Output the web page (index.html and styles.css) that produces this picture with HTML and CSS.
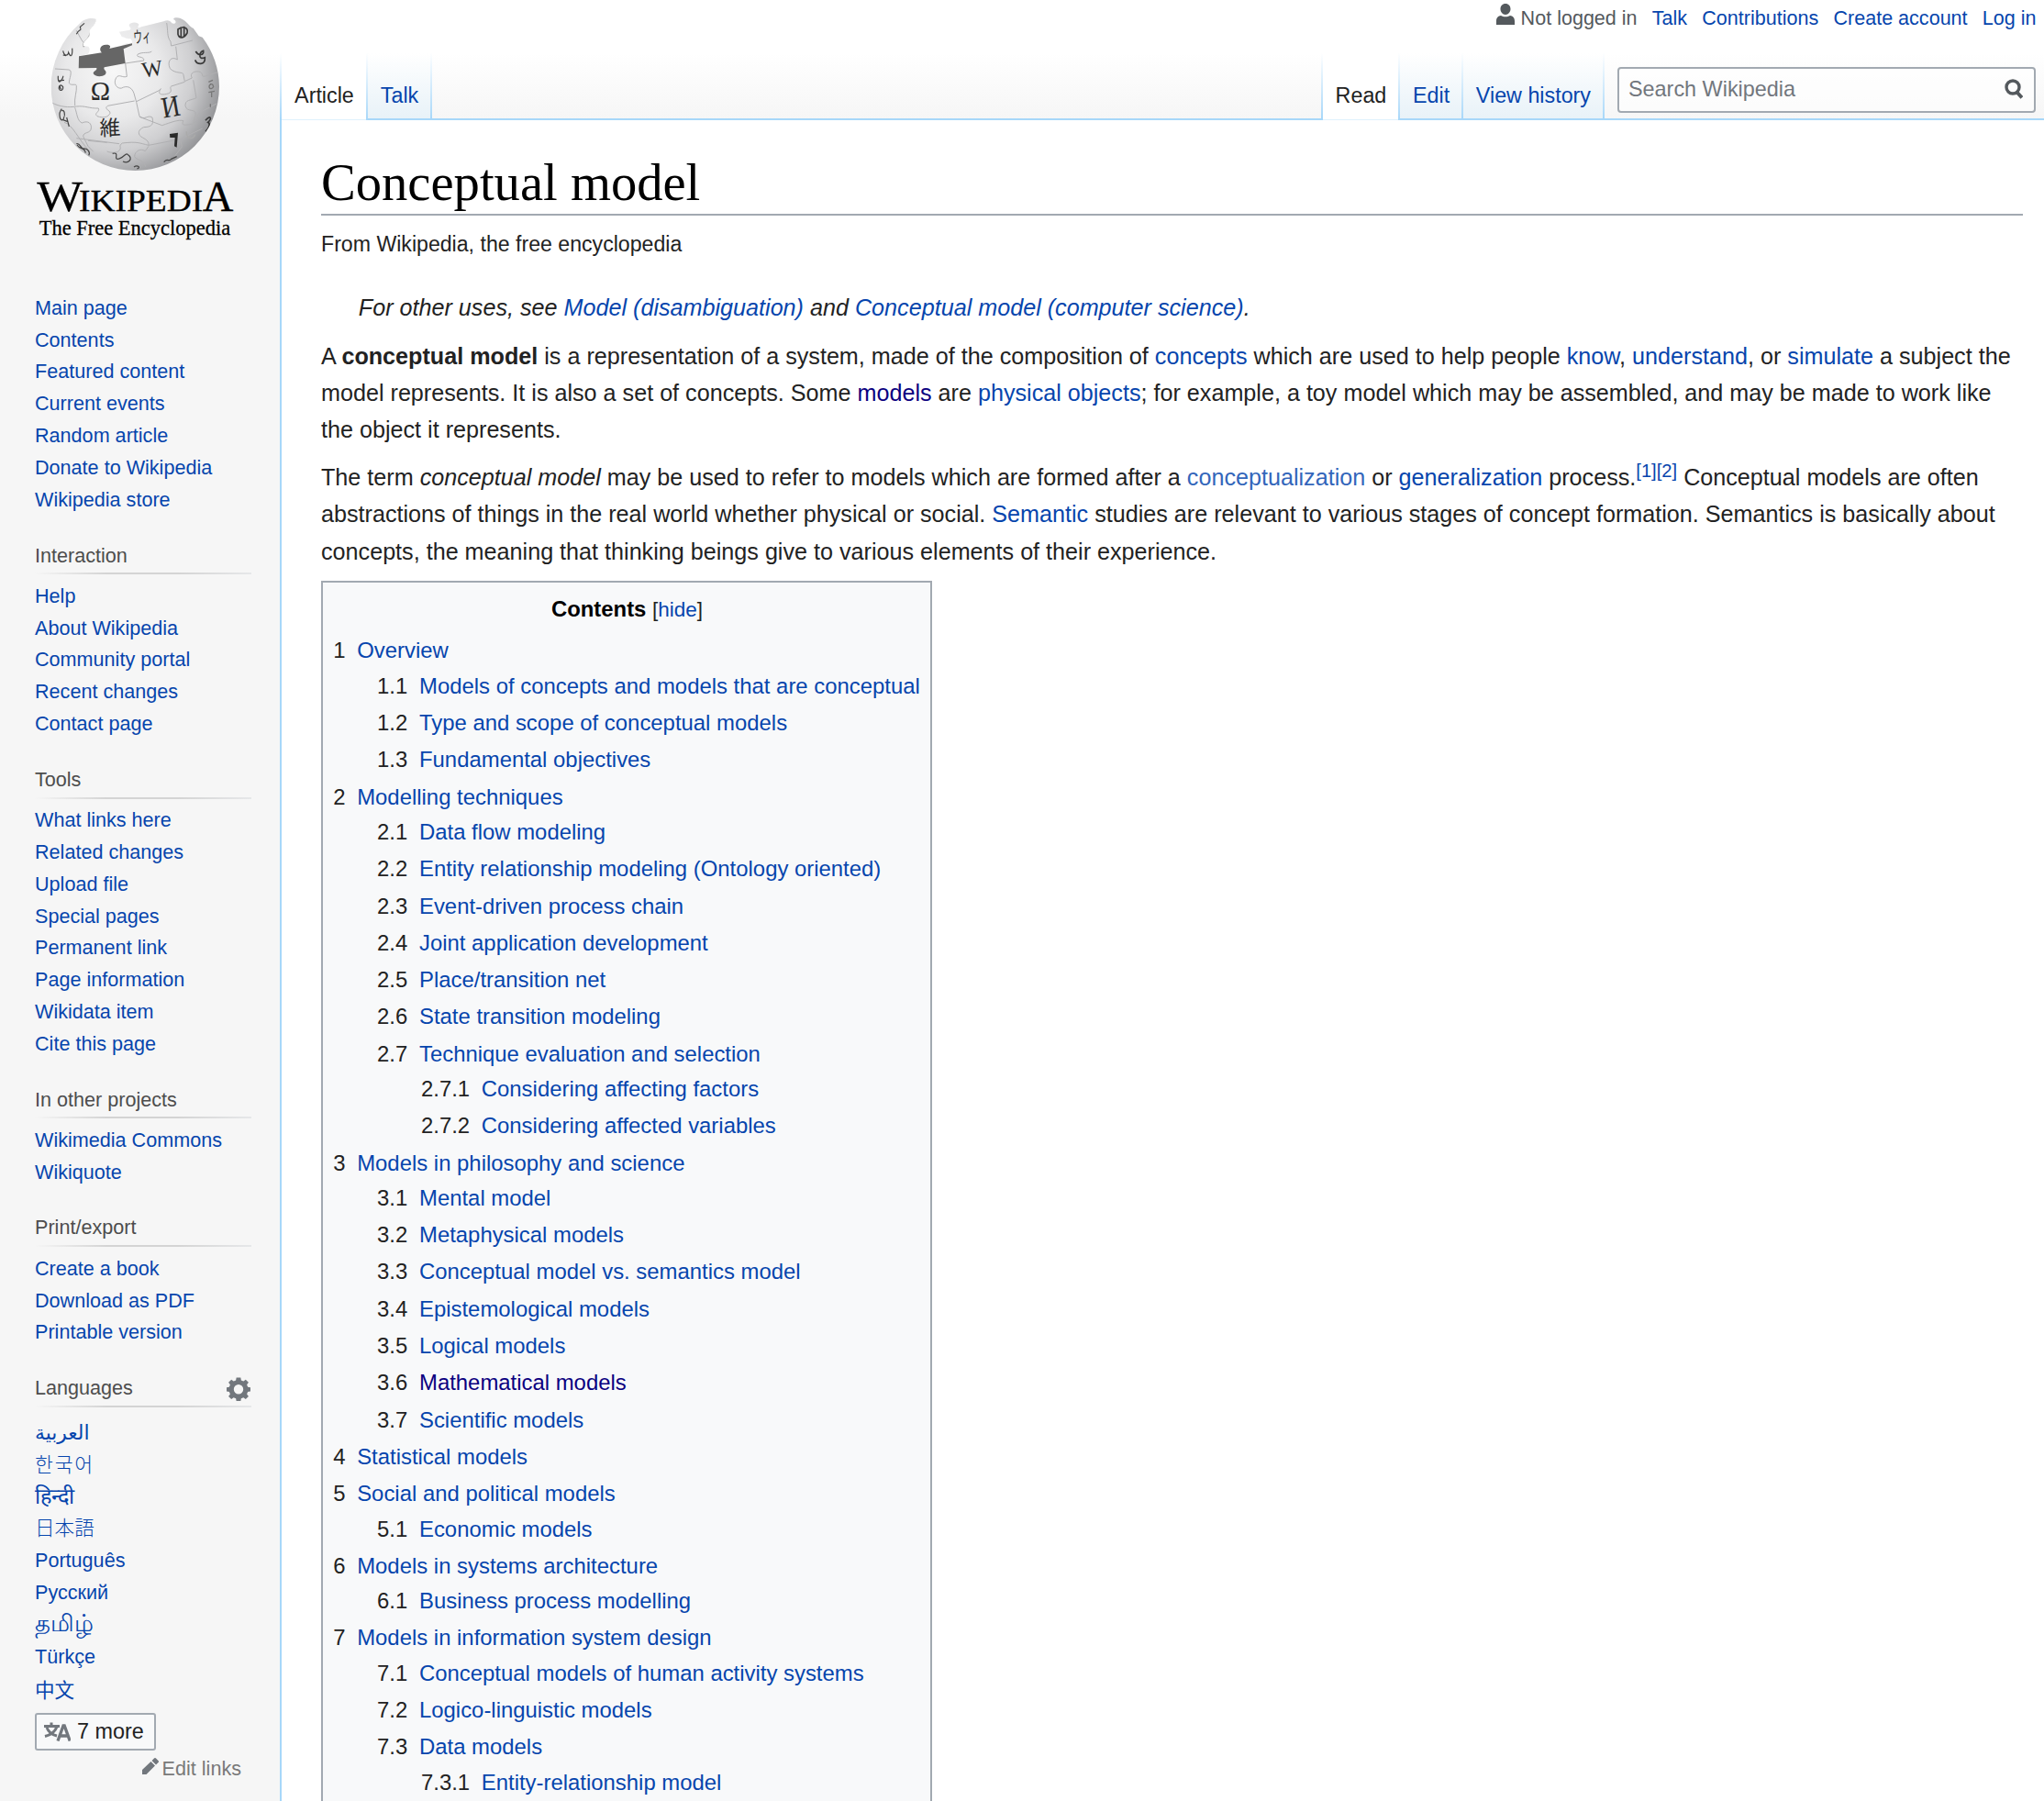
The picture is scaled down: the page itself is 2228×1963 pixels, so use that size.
FILE: index.html
```html
<!DOCTYPE html>
<html lang="en">
<head>
<meta charset="utf-8">
<title>Conceptual model - Wikipedia</title>
<link rel="stylesheet" href="styles.css">
</head>
<body>
<div class="page">
<aside class="sidebar">
  <svg class="logo" viewBox="0 0 920 870" role="img" aria-label="Wikipedia">
    <defs>
      <radialGradient id="ball" gradientUnits="userSpaceOnUse" cx="370" cy="235" r="370">
        <stop offset="0" stop-color="#f7f7f7"/><stop offset=".42" stop-color="#e9e9ea"/>
        <stop offset=".7" stop-color="#cfcfd1"/><stop offset="1" stop-color="#8f9093"/>
      </radialGradient>
      <clipPath id="globe"><path d="M314 62 C300 58 275 60 262 76 A275 275 0 0 0 167 283 A275 275 0 0 0 717 283 A275 275 0 0 0 662 122 L650 118 L632 92 C622 92 612 68 590 60 C580 56 564 58 568 64 C580 70 574 80 562 76 C554 64 545 66 535 70 L462 88 C452 94 448 90 454 82 C456 72 426 70 422 82 C424 92 432 92 424 98 L390 104 L398 120 C408 122 420 130 426 126 C436 136 432 144 424 142 C410 140 398 148 396 150 L406 210 L255 222 L257 183 L286 178 C294 172 296 156 288 152 L272 150 C270 138 284 130 292 118 L294 98 C304 86 316 72 314 62Z"/></clipPath>
    </defs>
    <g clip-path="url(#globe)">
      <rect x="160" y="50" width="565" height="515" fill="url(#ball)"/>
      <g fill="none" stroke="#b0b0b2" stroke-width="3">
        <path d="M250 100 C262 120 270 145 290 150 M180 225 L225 228 C240 230 225 260 226 272 C234 282 248 272 250 280 C252 300 242 320 245 345 M168 335 C195 350 225 352 250 348 C280 345 290 355 322 354 C328 366 305 370 318 380 C340 388 355 382 360 370 C360 358 338 358 352 346 L440 330 M245 352 C252 370 252 395 268 402 C290 392 300 405 298 420 C296 438 272 430 272 446 L288 478 L305 496 M410 207 L415 250 C400 256 390 240 380 254 C368 275 385 292 398 288 C412 280 430 282 438 305 L446 334 L456 380 C474 395 482 374 498 384 C505 412 490 415 470 416 C452 424 450 436 460 446 C476 456 488 460 486 475 M410 207 L470 198 C474 182 442 190 450 178 C465 168 488 176 496 168 M545 75 C550 100 545 120 558 136 L560 150 L630 132 M575 152 L580 195 C560 182 545 200 556 224 C575 244 600 232 600 245 L604 266 M604 268 L560 282 C552 286 568 300 550 306 C520 314 516 304 526 290 L520 296 L446 332 M604 266 L628 255 C618 238 638 232 650 234 C668 238 656 250 668 250 L712 236 M632 262 L642 320 C622 330 606 324 606 346 C612 370 640 352 640 374 L632 402 M456 382 L530 410 C560 400 584 390 600 395 C590 412 606 410 630 405 C655 390 630 378 668 360 L710 338 M288 460 L350 466 M250 452 L390 470 M486 475 C455 468 450 462 400 468 C385 478 400 482 390 492 C382 502 362 500 350 495 M486 478 L475 494 C460 484 440 494 440 512 C446 525 470 520 476 545 M486 475 L590 455 L662 420 M590 455 L595 480 L572 510 M210 400 C240 410 252 450 292 494"/>
      </g>
      <path d="M322 70 C312 95 300 100 296 120 C286 140 272 144 278 150" fill="none" stroke="#aaa" stroke-width="14"/>
      <g class="glyphs">
        <text x="296" y="328" font-size="86">Ω</text>
        <text transform="translate(468 254) rotate(-9)" font-size="72">W</text>
        <text transform="translate(534 386) rotate(-10)" font-size="98" textLength="60" lengthAdjust="spacingAndGlyphs">И</text>
        <text class="cjk" transform="translate(327 444) rotate(-3)" font-size="68">維</text>
        <text class="cjk" transform="translate(438 142) rotate(-5)" font-size="54" textLength="58" lengthAdjust="spacingAndGlyphs">ウィ</text>
        <path d="M555 438 L582 434 L578 482 L570 478 L572 450 L556 450Z"/>
        <path d="M640 168 C650 185 668 180 665 166 C650 172 648 198 670 188 C672 215 644 212 638 196" class="stroke"/>
        <path d="M582 96 C600 82 616 92 612 108 C602 126 586 128 582 112Z M592 90 L592 122 M602 86 L602 118" class="stroke"/>
        <path d="M206 166 C210 184 222 184 224 172 C232 192 238 180 236 158 M206 180 L216 182" class="stroke thin"/>
        <path d="M250 112 C260 90 268 105 262 88 L276 76" class="stroke thin"/>
        <path d="M190 248 C188 290 210 250 206 248 M190 264 L210 262 M194 280 C188 300 208 300 206 284 C200 276 190 276 200 292" class="stroke thin"/>
        <path d="M202 356 C188 372 198 404 208 388 C216 370 208 358 202 362 M206 392 L222 398 M218 384 L226 414" class="stroke thin"/>
        <path d="M250 470 C262 466 262 484 272 486 C288 484 296 500 290 508 M252 474 C262 490 276 480 280 500" class="stroke thin"/>
        <path d="M368 502 C392 496 372 520 384 520 C400 520 410 500 416 504 C440 520 418 536 402 528" class="stroke thin"/>
        <path d="M438 546 C450 538 462 548 448 552 M536 530 C548 514 550 532 560 520 L578 512" class="stroke thin"/>
        <path d="M682 268 L696 262 M690 274 C678 284 688 298 698 284 C696 272 688 274 690 278 M682 302 L702 298 M692 302 L692 318 M688 340 L688 350" class="stroke light"/>
        <path d="M672 394 C688 374 694 388 680 400 C690 404 682 422 672 430" class="stroke"/>
        <path d="M610 430 C608 452 630 460 638 440" class="stroke faint"/>
      </g>
    </g>
    <path fill="#666" d="M258 184 L333 172 C323 163 327 147 347 146 C362 145 363 154 357 159 L432 142 L432 148 L404 160 L410 207 L341 220 C336 230 352 231 345 243 C332 254 308 250 305 240 C305 231 318 232 316 222 L257 223Z"/>
    <g class="wordmark">
      <text x="121" y="690" font-size="140" textLength="150" lengthAdjust="spacingAndGlyphs">W</text>
      <text x="258" y="690" font-size="99" textLength="406" lengthAdjust="spacingAndGlyphs">IKIPEDI</text>
      <text x="662" y="690" font-size="140" textLength="101" lengthAdjust="spacingAndGlyphs">A</text>
      <text x="128" y="768" font-size="71" textLength="626" lengthAdjust="spacingAndGlyphs">The Free Encyclopedia</text>
    </g>
  </svg>

  <nav class="portal first"><ul>
    <li><a>Main page</a></li><li><a>Contents</a></li><li><a>Featured content</a></li><li><a>Current events</a></li><li><a>Random article</a></li><li><a>Donate to Wikipedia</a></li><li><a>Wikipedia store</a></li>
  </ul></nav>
  <nav class="portal"><h3>Interaction</h3><ul>
    <li><a>Help</a></li><li><a>About Wikipedia</a></li><li><a>Community portal</a></li><li><a>Recent changes</a></li><li><a>Contact page</a></li>
  </ul></nav>
  <nav class="portal"><h3>Tools</h3><ul>
    <li><a>What links here</a></li><li><a>Related changes</a></li><li><a>Upload file</a></li><li><a>Special pages</a></li><li><a>Permanent link</a></li><li><a>Page information</a></li><li><a>Wikidata item</a></li><li><a>Cite this page</a></li>
  </ul></nav>
  <nav class="portal"><h3>In other projects</h3><ul>
    <li><a>Wikimedia Commons</a></li><li><a>Wikiquote</a></li>
  </ul></nav>
  <nav class="portal"><h3>Print/export</h3><ul>
    <li><a>Create a book</a></li><li><a>Download as PDF</a></li><li><a>Printable version</a></li>
  </ul></nav>
  <nav class="portal languages"><h3>Languages
    <svg class="gear" viewBox="0 0 20 20"><path fill="#72777d" fill-rule="evenodd" d="M8.2 0.4h3.600l.4 2.300 1.900.8 1.900-1.400 2.400 2.400-1.400 1.900.8 1.900 2.200.4v3.200l-2.200.4-.8 1.900 1.400 1.900-2.400 2.400-1.900-1.400-1.900.8-.4 2.300H8.200l-.4-2.300-1.900-.8L4 18.500l-2.400-2.400L3 14.200l-.8-1.900L0 11.900V8.700l2.200-.4L3 6.400 1.600 4.500 4 2.100l1.900 1.400 1.900-.8zM10 6.200a4 4 0 1 0 0 8 4 4 0 0 0 0-8z"/></svg></h3><ul>
    <li><a lang="ar">العربية</a></li><li><a lang="ko">한국어</a></li><li><a lang="hi">हिन्दी</a></li><li><a lang="ja">日本語</a></li><li><a lang="pt">Português</a></li><li><a lang="ru">Русский</a></li><li><a lang="ta">தமிழ்</a></li><li><a lang="tr">Türkçe</a></li><li><a lang="zh">中文</a></li>
  </ul>
  <button class="more"><svg viewBox="0 0 29 21"><g fill="none" stroke="#72777d"><path stroke-width="3" d="M0 4.500h17M8 0.500v4M3 6c2 5 6 8 11 9M14 5C12 11 7 14 1 15.500"/><path stroke-width="3.300" d="M15 20.500L21 4h1.200l6 16.500M17.500 15h8"/></g></svg>7 more</button>
  <div class="edit-links"><svg viewBox="0 0 18 18"><path fill="#72777d" d="M0 18v-5L9.500 4 14 8.500 4.500 18zM10.500 3L13 .500c.7-.7 1.300-.7 2 0L17.500 3c.7.700.7 1.300 0 2L15 7.500z"/></svg>Edit links</div>
  </nav>
</aside>

<div class="main">
  <ul class="personal">
    <li class="anon"><svg viewBox="0 0 20 23"><path fill="#54595d" d="M10 0c3.300 0 5.500 2.600 5.500 5.800S13.300 12 10 12 4.500 9 4.500 5.800 6.700 0 10 0zM0 23v-4c0-3.600 2.200-5.700 5-6 2.800 1.700 7.200 1.700 10 0 2.800.3 5 2.400 5 6v4z"/></svg>Not logged in</li>
    <li><a>Talk</a></li><li><a>Contributions</a></li><li><a>Create account</a></li><li><a>Log in</a></li>
  </ul>
  <div class="navrow">
    <div class="tabs"><span class="tab active">Article</span><a class="tab">Talk</a></div>
    <div class="tabs views"><span class="tab active">Read</span><a class="tab">Edit</a><a class="tab">View history</a></div>
    <div class="search"><span>Search Wikipedia</span><svg viewBox="0 0 20 22"><circle cx="9" cy="9" r="7" fill="none" stroke="#54595d" stroke-width="3.400"/><path d="M13.500 14.500L19 20.500" stroke="#54595d" stroke-width="4"/></svg></div>
  </div>
  <main class="content">
    <h1>Conceptual model</h1>
    <div class="sitesub">From Wikipedia, the free encyclopedia</div>
    <div class="hatnote">For other uses, see <a>Model (disambiguation)</a> and <a>Conceptual model (computer science)</a>.</div>
    <p>A <b>conceptual model</b> is a representation of a system, made of the composition of <a>concepts</a> which are used to help people <a>know</a>, <a>understand</a>, or <a>simulate</a> a subject the<br>model represents. It is also a set of concepts. Some <a class="visited">models</a> are <a>physical objects</a>; for example, a toy model which may be assembled, and may be made to work like<br>the object it represents.</p>
    <p>The term <i>conceptual model</i> may be used to refer to models which are formed after a <a class="ext">conceptualization</a> or <a>generalization</a> process.<sup><a>[1]</a><a>[2]</a></sup> Conceptual models are often<br>abstractions of things in the real world whether physical or social. <a>Semantic</a> studies are relevant to various stages of concept formation. Semantics is basically about<br>concepts, the meaning that thinking beings give to various elements of their experience.</p>
    <div class="toc">
      <div class="toc-title"><b>Contents</b> <span>[<a>hide</a>]</span></div>
      <ul>
        <li><span>1</span><a>Overview</a><ul>
          <li><span>1.1</span><a>Models of concepts and models that are conceptual</a></li>
          <li><span>1.2</span><a>Type and scope of conceptual models</a></li>
          <li><span>1.3</span><a>Fundamental objectives</a></li></ul></li>
        <li><span>2</span><a>Modelling techniques</a><ul>
          <li><span>2.1</span><a>Data flow modeling</a></li>
          <li><span>2.2</span><a>Entity relationship modeling (Ontology oriented)</a></li>
          <li><span>2.3</span><a>Event-driven process chain</a></li>
          <li><span>2.4</span><a>Joint application development</a></li>
          <li><span>2.5</span><a>Place/transition net</a></li>
          <li><span>2.6</span><a>State transition modeling</a></li>
          <li><span>2.7</span><a>Technique evaluation and selection</a><ul>
            <li><span>2.7.1</span><a>Considering affecting factors</a></li>
            <li><span>2.7.2</span><a>Considering affected variables</a></li></ul></li></ul></li>
        <li><span>3</span><a>Models in philosophy and science</a><ul>
          <li><span>3.1</span><a>Mental model</a></li>
          <li><span>3.2</span><a>Metaphysical models</a></li>
          <li><span>3.3</span><a>Conceptual model vs. semantics model</a></li>
          <li><span>3.4</span><a>Epistemological models</a></li>
          <li><span>3.5</span><a>Logical models</a></li>
          <li><span>3.6</span><a class="visited">Mathematical models</a></li>
          <li><span>3.7</span><a>Scientific models</a></li></ul></li>
        <li><span>4</span><a>Statistical models</a></li>
        <li><span>5</span><a>Social and political models</a><ul>
          <li><span>5.1</span><a>Economic models</a></li></ul></li>
        <li><span>6</span><a>Models in systems architecture</a><ul>
          <li><span>6.1</span><a>Business process modelling</a></li></ul></li>
        <li><span>7</span><a>Models in information system design</a><ul>
          <li><span>7.1</span><a>Conceptual models of human activity systems</a></li>
          <li><span>7.2</span><a>Logico-linguistic models</a></li>
          <li><span>7.3</span><a>Data models</a><ul>
            <li><span>7.3.1</span><a>Entity-relationship model</a></li></ul></li></ul></li>
      </ul>
    </div>
  </main>
</div>
</div>
</body>
</html>
```
FILE: styles.css
```css
* { box-sizing: border-box; }
body {
  margin: 0;
  background: #f6f6f6;
  color: #222;
  font-family: "Liberation Sans", Arial, sans-serif;
}
ul { list-style: none; margin: 0; padding: 0; }
a { color: #0645ad; text-decoration: none; }
a.visited { color: #0b0080; }
a.ext { color: #36b; }

.page {
  display: grid;
  grid-template-columns: 305px 1fr;
  height: 1963px;
  overflow: hidden;
  background: linear-gradient(#fff 58px, #f6f6f6 129px);
}

/* Sidebar */
.sidebar { min-width: 0; font-size: 21.6px; }
.logo { display: block; width: 306.67px; height: 290px; overflow: visible; }
.glyphs { fill: #2a2a2a; font-family: "Liberation Serif", serif; }
.glyphs .cjk { font-family: "Noto Sans CJK JP", sans-serif; }
.glyphs .stroke { fill: none; stroke: #3a3a3a; stroke-width: 5; }
.glyphs .thin { stroke: #444; stroke-width: 3.6; }
.glyphs .light { stroke: #777; stroke-width: 4; }
.glyphs .faint { stroke: #aaa; stroke-width: 4; }
.wordmark { font-family: "Liberation Serif", serif; fill: #000; stroke: #000; stroke-width: .8; }

.portal { padding: 25.8px 31px 0 38px; }
.portal.first { padding-top: 28.8px; }
.portal h3 {
  display: flex;
  justify-content: space-between;
  margin: 0 0 6.5px;
  height: 37.8px;
  font-size: 21.6px;
  font-weight: 400;
  line-height: 34.6px;
  color: #4d4d4d;
  background: linear-gradient(to right, rgba(200,204,209,0), #d4d4d4 33%, #d4d4d4 66%, rgba(200,204,209,.35)) 0 100% / 100% 2px no-repeat;
}
.portal li { height: 34.85px; line-height: 34.85px; white-space: nowrap; }
.portal.languages h3 { margin-bottom: 11px; }
[lang="ar"] { font-family: "DejaVu Sans", sans-serif; font-size: 21.8px; }
[lang="ko"] { font-family: "Noto Sans CJK KR", sans-serif; font-weight: 300; letter-spacing: 1.8px; line-height: 1; }
[lang="hi"] { font-size: 23.5px; line-height: 1; }
[lang="ta"] { font-size: 26px; line-height: 1; }
[lang="ja"] { font-family: "Noto Sans CJK JP", sans-serif; font-weight: 300; line-height: 1; }
[lang="zh"] { font-family: "Noto Sans CJK SC", sans-serif; }
.gear { width: 26px; height: 26px; margin: 5px 1px 0 0; }
.more {
  display: flex;
  align-items: center;
  gap: 7px;
  width: 132px;
  height: 41px;
  margin: 8.5px 0 0;
  padding: 0 0 0 8px;
  border: 2px solid #a2a9b1;
  border-radius: 3px;
  background: #f8f9fa;
  color: #222;
  font: 23.4px "Liberation Sans", Arial, sans-serif;
}
.more svg { width: 29px; height: 21px; }
.edit-links {
  display: flex;
  justify-content: flex-end;
  gap: 4px;
  padding-right: 11px;
  margin-top: 2px;
  line-height: 36px;
  color: #797979;
}
.edit-links svg { width: 18px; height: 18px; margin-top: 6px; }

/* Header */
.main { display: flex; flex-direction: column; min-width: 0; }
.personal {
  display: flex;
  justify-content: flex-end;
  gap: 16.2px;
  height: 58px;
  padding-right: 8.5px;
  font-size: 21.55px;
  line-height: 40px;
}
.anon { display: flex; gap: 7px; color: #54595d; }
.anon svg { width: 20px; height: 23px; margin-top: 4px; }
.navrow { display: flex; height: 71px; flex: none; }
.tabs {
  display: flex;
  padding-left: 2px;
  background: linear-gradient(#fff, #a7d7f9) 0 0 / 2px 100% no-repeat;
}
.tab {
  display: block;
  padding: 33px 12.9px 0 14.1px;
  font-size: 23.3px;
  line-height: 27px;
  border-right: 2px solid;
  border-image: linear-gradient(#fff, #a7d7f9) 1;
  background: linear-gradient(#fff, #e8f2f8);
}
.tab.active {
  position: relative;
  z-index: 1;
  margin-bottom: -2px;
  color: #222;
  background: linear-gradient(#dff1fd, #dff1fd) 0 100% / 100% 1px no-repeat, #fff;
}
.views { margin-left: auto; }
.views .tab { padding-right: 12.6px; }
.search {
  display: flex;
  justify-content: space-between;
  width: 456px;
  height: 50px;
  margin: 15px 9px 0 14.4px;
  padding: 0 12px 0 10px;
  border: 2px solid #a2a9b1;
  border-radius: 4px;
  background: rgba(255,255,255,.6);
  font-size: 23.4px;
  line-height: 44px;
  color: #72777d;
}
.search svg { width: 20px; height: 22px; margin-top: 11px; }

/* Article */
.content {
  flex: 1;
  min-height: 0;
  padding: 35px 23px 0 43px;
  border: solid #a7d7f9;
  border-width: 2px 0 0 2px;
  background: #fff;
  font-size: 25.165px;
  line-height: 40.32px;
}
h1 {
  margin: 0;
  height: 69px;
  border-bottom: 2px solid #a2a9b1;
  color: #000;
  font: 400 56.6px/67px "Liberation Serif", serif;
}
.sitesub { margin-top: 13.3px; font-size: 23.14px; line-height: 37px; }
.hatnote { margin: 29.7px 0 12.3px; padding-left: 40.8px; font-style: italic; }
p { margin: 0 0 11.6px; white-space: nowrap; }
sup { font-size: 20.16px; line-height: 1; vertical-align: super; }

.toc {
  width: 666px;
  height: 1400px;
  padding: 10.8px 0 0 11.2px;
  border: 2px solid #a2a9b1;
  background: #f8f9fa;
  font-size: 23.9px;
  line-height: 38.3px;
}
.toc-title { padding-right: 10.2px; margin-bottom: 5.7px; text-align: center; }
.toc-title b { color: #000; }
.toc-title span { font-size: 22.5px; }
.toc li { margin-bottom: 2px; white-space: nowrap; }
.toc li > span { padding-right: 12.7px; }
.toc ul ul { margin-left: 47.9px; }
```
